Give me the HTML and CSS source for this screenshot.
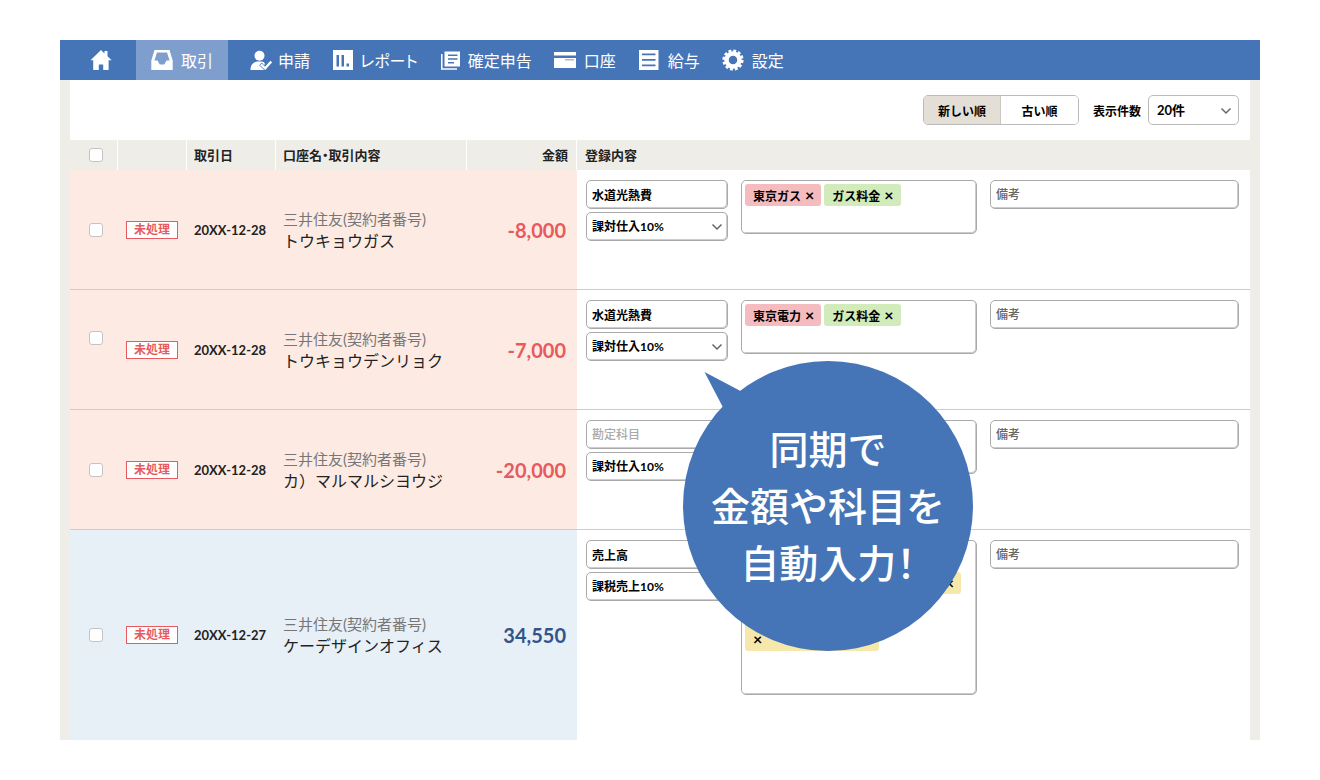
FILE: index.html
```html
<!DOCTYPE html>
<html lang="ja">
<head>
<meta charset="utf-8">
<meta name="viewport" content="width=device-width, initial-scale=1">
<title>取引</title>
<link rel="stylesheet" href="styles.css">
</head>
<body>
<svg class="sprite" aria-hidden="true">
  <symbol id="chevron" viewBox="0 0 12 8"><path d="M1.500 1.500 6 6l4.500-4.500" fill="none" stroke="#666" stroke-width="1.500"/></symbol>
</svg>
<div class="app">
  <nav class="nav">
    <a class="nav-home" href="#" aria-label="ホーム">
      <svg class="icon" viewBox="0 0 22 22"><path d="M11 1 0.500 11.300H3.200V21H8.800V15.500H13.200V21H18.600V11.300H21.600L17.500 7.300V2H14.500V4.400Z"/></svg>
    </a>
    <a class="nav-active" href="#" aria-current="page">
      <svg class="icon" viewBox="0 0 22 22"><path fill-rule="evenodd" d="M3.500 1H18.500L21.700 11.500V21H.3V11.500ZM6 3.600 3.400 11.500H6.500L8.700 15.500H13.300L15.500 11.500H18.600L16 3.600Z"/></svg>取引</a>
    <ul class="nav-list">
      <li><a href="#"><svg class="icon" viewBox="0 0 22 22"><circle cx="9.500" cy="6.800" r="5"/><path d="M7 12.500H12C13.500 12.900 14.300 13.500 14.800 14.200L14.300 16.400 11.800 13.600 9.200 16.200 14.200 21H.5C.5 16.500 2.500 13.500 7 12.500Z"/><path d="M10.800 15.300 15.200 19.300 21.300 12.600" fill="none" stroke="#fff" stroke-width="2.400"/></svg>申請</a></li>
      <li><a href="#"><svg class="icon" viewBox="0 0 22 22"><path fill-rule="evenodd" d="M1 1H21V21H1ZM4.500 6V17.500H7V6ZM9.500 6V17.500H12V6ZM14.500 14.500V17.500H17V14.500Z"/></svg>レポート</a></li>
      <li><a href="#"><svg class="icon" viewBox="0 0 22 22"><path fill-rule="evenodd" d="M4.500 2.500H20V17.500H4.500ZM8 5.500V7H17.500V5.500ZM8 9.200V10.700H17.500V9.200ZM8 13V14.500H14V13Z"/><path d="M1.800 5V20H17" fill="none" stroke="#fff" stroke-width="1.500"/></svg>確定申告</a></li>
      <li><a class="wide" href="#"><svg class="icon" viewBox="0 0 22 22"><path d="M0 3H22V6.500H0Z"/><path fill-rule="evenodd" d="M0 9H22V19H0ZM11 10.500V11.200H20V10.500Z"/></svg>口座</a></li>
      <li><a class="wide" href="#"><svg class="icon" viewBox="0 0 22 22"><path fill-rule="evenodd" d="M1 1H20.500V21H1ZM4 4.500V6.300H17.500V4.500ZM4 10V11.800H17.500V10ZM4 15.500V17.300H17.500V15.500Z"/></svg>給与</a></li>
      <li><a class="wide" href="#"><svg class="icon" viewBox="0 0 22 22"><circle cx="11" cy="11" r="6.500" fill="none" stroke="#fff" stroke-width="4.500"/><circle cx="11" cy="11" r="9.300" fill="none" stroke="#fff" stroke-width="2.600" stroke-dasharray="2.920 1.950"/></svg>設定</a></li>
    </ul>
  </nav>

  <main class="panel">
    <div class="toolbar">
      <div class="segment">
        <button type="button" class="selected">新しい順</button><button type="button">古い順</button>
      </div>
      <label for="count">表示件数</label>
      <span class="select count"><select id="count"><option>20件</option></select><svg><use href="#chevron"/></svg></span>
    </div>

    <table class="ledger">
      <colgroup><col class="c-check"><col class="c-state"><col class="c-date"><col class="c-name"><col class="c-amount"><col></colgroup>
      <thead>
        <tr>
          <th class="check"><input type="checkbox" aria-label="すべて選択"></th>
          <th></th>
          <th>取引日</th>
          <th>口座名・取引内容</th>
          <th class="right">金額</th>
          <th class="entry-head">登録内容</th>
        </tr>
      </thead>
      <tbody>
        <tr class="out">
          <td class="check"><input type="checkbox" aria-label="選択"></td>
          <td class="state"><span class="badge">未処理</span></td>
          <td class="date">20XX-12-28</td>
          <td><p class="bank">三井住友(契約者番号)</p><p class="detail">トウキョウガス</p></td>
          <td class="amount">-8,000</td>
          <td class="entry"><div class="fields">
            <div class="pair"><input class="box" aria-label="勘定科目" value="水道光熱費"><span class="select"><select aria-label="税区分"><option>課対仕入10%</option></select><svg><use href="#chevron"/></svg></span></div>
            <div class="tags"><span class="tag pink">東京ガス<button type="button">×</button></span><span class="tag green">ガス料金<button type="button">×</button></span></div>
            <input class="box note" aria-label="備考" placeholder="備考">
          </div></td>
        </tr>
        <tr class="out">
          <td class="check raised"><input type="checkbox" aria-label="選択"></td>
          <td class="state"><span class="badge">未処理</span></td>
          <td class="date">20XX-12-28</td>
          <td><p class="bank">三井住友(契約者番号)</p><p class="detail">トウキョウデンリョク</p></td>
          <td class="amount">-7,000</td>
          <td class="entry"><div class="fields">
            <div class="pair"><input class="box" aria-label="勘定科目" value="水道光熱費"><span class="select"><select aria-label="税区分"><option>課対仕入10%</option></select><svg><use href="#chevron"/></svg></span></div>
            <div class="tags"><span class="tag pink">東京電力<button type="button">×</button></span><span class="tag green">ガス料金<button type="button">×</button></span></div>
            <input class="box note" aria-label="備考" placeholder="備考">
          </div></td>
        </tr>
        <tr class="out">
          <td class="check"><input type="checkbox" aria-label="選択"></td>
          <td class="state"><span class="badge">未処理</span></td>
          <td class="date">20XX-12-28</td>
          <td><p class="bank">三井住友(契約者番号)</p><p class="detail">カ）マルマルシヨウジ</p></td>
          <td class="amount">-20,000</td>
          <td class="entry"><div class="fields">
            <div class="pair"><input class="box" aria-label="勘定科目" placeholder="勘定科目"><span class="select"><select aria-label="税区分"><option>課対仕入10%</option></select><svg><use href="#chevron"/></svg></span></div>
            <div class="tags"></div>
            <input class="box note" aria-label="備考" placeholder="備考">
          </div></td>
        </tr>
        <tr class="in">
          <td class="check"><input type="checkbox" aria-label="選択"></td>
          <td class="state"><span class="badge">未処理</span></td>
          <td class="date">20XX-12-27</td>
          <td><p class="bank">三井住友(契約者番号)</p><p class="detail">ケーデザインオフィス</p></td>
          <td class="amount">34,550</td>
          <td class="entry"><div class="fields">
            <div class="pair"><input class="box" aria-label="勘定科目" value="売上高"><span class="select"><select aria-label="税区分"><option>課税売上10%</option></select><svg><use href="#chevron"/></svg></span></div>
            <div class="tags tall"><span class="tag yellow long"><button type="button">×</button></span><span class="tag yellow wrapped"><button type="button">×</button></span></div>
            <input class="box note" aria-label="備考" placeholder="備考">
          </div></td>
        </tr>
      </tbody>
    </table>
  </main>

  <div class="balloon">
    <svg viewBox="0 0 290 290"><circle cx="145" cy="145" r="145"/><path d="M21.500 11 57.500 30 70 60 52 70 39.500 45.500Z"/></svg>
    <p>同期で<br>金額や科目を<br>自動入力<span class="mark">！</span></p>
  </div>
</div>
</body>
</html>
```

FILE: styles.css
```css
* { box-sizing: border-box; }

body {
  margin: 0;
  padding: 40px 60px;
  background: #fff;
  color: #222;
  font-family: Lato, "Noto Sans CJK JP", sans-serif;
  font-size: 12px;
}

p, ul { margin: 0; padding: 0; list-style: none; }

button, input, select { font: inherit; color: #000; }

.sprite { position: absolute; width: 0; height: 0; }

.app { position: relative; background: #eeede8; }

/* navigation */
.nav {
  display: flex;
  height: 40px;
  background: #4575b6;
  font-size: 16px;
  font-feature-settings: "palt";
}

.nav a {
  display: flex;
  align-items: center;
  gap: 6px;
  color: #fff;
  text-decoration: none;
  white-space: nowrap;
}

.nav a.wide { gap: 8px; }
.nav a.nav-home { padding: 0 24px 0 30px; }
.nav a.nav-active { gap: 8px; padding: 0 15px; background: #7e9fcd; }

.nav-list { display: flex; align-items: center; gap: 22px; padding-left: 22px; }

.icon { width: 22px; height: 22px; fill: #fff; }

/* toolbar */
.panel { margin: 0 10px; background: #fff; }

.toolbar {
  display: flex;
  justify-content: flex-end;
  align-items: center;
  height: 60px;
  padding-right: 11px;
  font-weight: 700;
  color: #000;
}

.segment {
  display: flex;
  height: 30px;
  margin-right: 14px;
  border: 1px solid #bbb;
  border-radius: 5px;
  overflow: hidden;
}

.segment button {
  width: 77px;
  padding: 0;
  border: 0;
  background: #fff;
}

.segment .selected { background: #e3dfd7; border-right: 1px solid #ccc8c2; }

/* form controls */
.box, .select select {
  display: block;
  width: 100%;
  height: 29px;
  margin: 0;
  padding: 0 5px;
  border: 1px solid #aaa;
  border-radius: 5px;
  background: #fff;
  box-shadow: inset -1px -1px #ccc;
  font-weight: 700;
  appearance: none;
}

.box::placeholder { color: #aaa; font-weight: 500; opacity: 1; }
.note::placeholder { color: #666; }

.select { position: relative; display: block; }

.select svg {
  position: absolute;
  top: 11px;
  right: 5px;
  width: 12px;
  height: 8px;
  pointer-events: none;
}

.count { width: 91px; margin-left: 7px; }
.count select { height: 30px; padding-left: 8px; border-color: #bbb; box-shadow: none; font-size: 13px; }
.count svg { top: 12px; right: 7px; }

input[type="checkbox"] {
  display: block;
  width: 14px;
  height: 14px;
  margin: 0 auto;
  border: 1px solid #c4c4c4;
  border-radius: 3px;
  background: #fff;
  appearance: none;
}

/* ledger */
.ledger {
  width: 100%;
  table-layout: fixed;
  border-collapse: separate;
  border-spacing: 0;
}

.c-check { width: 48px; }
.c-state { width: 69px; }
.c-date { width: 89px; }
.c-name { width: 191px; }
.c-amount { width: 110px; }

th {
  height: 30px;
  padding: 0 8px 0 7px;
  border-right: 1px solid #fff;
  background: #eeede8;
  font-size: 13px;
  font-weight: 700;
  line-height: 20px;
  text-align: left;
  font-feature-settings: "palt";
}

th.right { text-align: right; }
th:last-child { border-right: 0; }
th.check, td.check { padding: 0 0 0 4px; }
th.entry-head { padding-left: 8px; }

td {
  height: 120px;
  padding: 0 0 0 7px;
  border-bottom: 1px solid #ccc;
  white-space: nowrap;
}

td.raised { padding-bottom: 24px; }

.out td { background: #fdebe3; }
.in td { height: 210px; border-bottom: 0; background: #e7eff7; }

td.state { padding-left: 8px; }

.badge {
  display: block;
  width: 52px;
  height: 18px;
  border: 1px solid #e75a5d;
  background: #fff;
  color: #e75a5d;
  font-weight: 700;
  line-height: 16px;
  text-align: center;
}

.date { font-size: 13px; font-weight: 700; }

.bank {
  color: #777;
  font-size: 15px;
  line-height: 22px;
}

.detail { font-size: 16px; font-weight: 400; line-height: 22px; }

td.amount {
  padding-right: 11px;
  color: #e75a5d;
  font-size: 20px;
  font-weight: 700;
  text-align: right;
}

.in td.amount { color: #325489; }

.ledger td.entry {
  padding: 10px 11px 0 9px;
  background: #fff;
  vertical-align: top;
}

.fields {
  display: grid;
  grid-template-columns: 142px 236px 1fr;
  gap: 13px;
  align-items: start;
}

.pair { display: grid; gap: 3px; }

.tags {
  display: flex;
  flex-wrap: wrap;
  align-content: flex-start;
  gap: 3px;
  min-height: 54px;
  padding: 3px;
  border: 1px solid #aaa;
  border-radius: 5px;
  box-shadow: inset -1px -1px #ccc;
}

.tag {
  display: flex;
  align-items: center;
  gap: 4px;
  height: 22px;
  padding: 0 7px 0 8px;
  border-radius: 3px;
  color: #000;
  font-weight: 700;
}

.tag button { padding: 0; border: 0; background: none; font-size: 16px; line-height: 16px; }

.pink { background: #f4bcbe; }
.green { background: #d1ebba; }
.yellow { background: #f5e8aa; }

.tags.tall { min-height: 155px; padding-top: 31px; }
.long { width: 216px; justify-content: flex-end; }
.wrapped { width: 134px; height: 54px; align-items: flex-end; padding-bottom: 4px; }

/* balloon */
.balloon {
  position: absolute;
  top: 321px;
  left: 623px;
  display: grid;
  place-items: center;
  width: 290px;
  height: 290px;
}

.balloon svg {
  position: absolute;
  inset: 0;
  overflow: visible;
  fill: #4575b6;
}

.balloon p {
  position: relative;
  color: #fff;
  font-size: 39px;
  font-weight: 500;
  line-height: 57px;
  text-align: center;
  white-space: nowrap;
}

.mark { font-feature-settings: "palt"; }
```
